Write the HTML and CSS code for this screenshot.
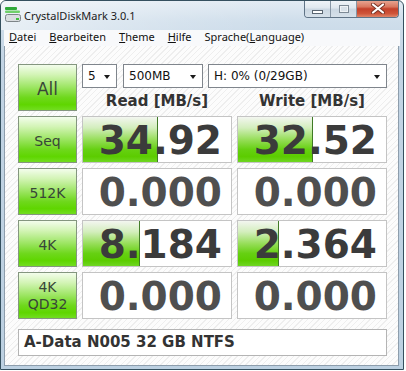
FILE: index.html
```html
<!DOCTYPE html>
<html lang="de">
<head>
    <meta charset="UTF-8">
    <meta name="viewport" content="width=device-width, initial-scale=1.0">
    <title>CrystalDiskMark 3.0.1</title>
    <link rel="stylesheet" href="styles.css">
</head>
<body>
    <div class="window">
        <div class="titlebar">
            <svg class="app-icon" width="16" height="15" viewBox="0 0 16 15">
                <rect x="0" y="0" width="12" height="3" rx="1" fill="#2fa83a"/>
                <rect x="0" y="3.5" width="15" height="2.5" rx="1" fill="#6fd06a"/>
                <rect x="0.5" y="7.5" width="15" height="7" rx="2" fill="#d9dde0" stroke="#7d8488"/>
                <rect x="11" y="11" width="3" height="2" fill="#3fbf3f"/>
            </svg>
            <span class="title">CrystalDiskMark 3.0.1</span>
            <div class="caption-buttons">
                <span class="cap cap-min"><i></i></span>
                <span class="cap cap-max"><i></i></span>
                <span class="cap cap-close">
                    <svg width="14" height="11" viewBox="0 0 14 11">
                        <path d="M2 1.5 L12 9.5 M12 1.5 L2 9.5" stroke="#7a3426" stroke-width="4" stroke-linecap="round"/>
                        <path d="M2 1.5 L12 9.5 M12 1.5 L2 9.5" stroke="#ffffff" stroke-width="2.2" stroke-linecap="round"/>
                    </svg>
                </span>
            </div>
        </div>

        <div class="menubar">
            <span><u>D</u>atei</span>
            <span><u>B</u>earbeiten</span>
            <span><u>T</u>heme</span>
            <span><u>H</u>ilfe</span>
            <span>Sprache(<u>L</u>anguage)</span>
        </div>

        <div class="client">
            <div class="grid">
                <button class="test test-all">All</button>
                <div class="top-controls">
                    <div class="combos">
                        <div class="combo combo-count">5</div>
                        <div class="combo combo-size">500MB</div>
                        <div class="combo combo-drive">H: 0% (0/29GB)</div>
                    </div>
                    <div class="headers">
                        <span>Read [MB/s]</span>
                        <span>Write [MB/s]</span>
                    </div>
                </div>

                <button class="test">Seq</button>
                <div class="value bar" style="background-size: 50.7% 100%;">34.92</div>
                <div class="value bar" style="background-size: 50.7% 100%;">32.52</div>

                <button class="test">512K</button>
                <div class="value zero">0.000</div>
                <div class="value zero">0.000</div>

                <button class="test">4K</button>
                <div class="value bar" style="background-size: 38.5% 100%;">8.184</div>
                <div class="value bar" style="background-size: 27.7% 100%;">2.364</div>

                <button class="test test-two">4K<br>QD32</button>
                <div class="value zero">0.000</div>
                <div class="value zero">0.000</div>
            </div>

            <div class="comment">A-Data N005 32 GB NTFS</div>
        </div>
    </div>
</body>
</html>
```

FILE: styles.css
```css
* {
    margin: 0;
    padding: 0;
    box-sizing: border-box;
}

body {
    background: #ffffff;
    font-family: "DejaVu Sans", Verdana, sans-serif;
}

.window {
    width: 404px;
    height: 370px;
    border: 1px solid #35505f;
    border-radius: 6px 6px 0 0;
    background: linear-gradient(to bottom, #e2ebf3 0px, #cfdeeb 20px, #c2d4e4 60px, #bcd0e1 100%);
    display: flex;
    flex-direction: column;
    overflow: hidden;
}

/* title bar */

.titlebar {
    height: 29px;
    display: flex;
    align-items: flex-start;
    padding-left: 4px;
    padding-right: 4px;
    background: linear-gradient(100deg, rgba(255,255,255,0.55) 0%, rgba(255,255,255,0.15) 45%, rgba(255,255,255,0) 70%);
}

.app-icon {
    margin-top: 6px;
    flex-shrink: 0;
}

.title {
    margin-top: 7px;
    margin-left: 3px;
    font-family: "Noto Sans", sans-serif;
    font-size: 11px;
    line-height: 15px;
    color: #1b1b1b;
}

.caption-buttons {
    margin-left: auto;
    display: flex;
    height: 18px;
    margin-top: -1px;
    border: 1px solid #5f7386;
    border-top: none;
    border-radius: 0 0 4px 4px;
    overflow: hidden;
}

.cap {
    display: flex;
    align-items: center;
    justify-content: center;
    height: 100%;
    background: linear-gradient(to bottom, #f1f5f9 0%, #e0e8ef 45%, #cbd7e2 55%, #d6e1ea 100%);
}

.cap + .cap {
    border-left: 1px solid #8796a5;
}

.cap-min {
    width: 25px;
}

.cap-min i {
    display: block;
    width: 11px;
    height: 4px;
    margin-top: 6px;
    background: #ffffff;
    border: 1px solid #5a6672;
}

.cap-max {
    width: 26px;
}

.cap-max i {
    display: block;
    width: 10px;
    height: 8px;
    border: 1px solid #7d8a96;
    box-shadow: inset 0 0 0 1px #eef2f5;
    background: #d8e1e9;
}

.cap-close {
    width: 42px;
    background: linear-gradient(to bottom, #e9aa98 0%, #d9775f 40%, #c3402a 52%, #cf553a 80%, #e0866a 100%);
}

/* menu */

.menubar {
    height: 16px;
    display: flex;
    gap: 13px;
    padding-left: 5px;
    margin: 0 3px;
    background: #f8f9fb;
    font-family: "Noto Sans", sans-serif;
    font-size: 11px;
    line-height: 14px;
    color: #111111;
}

.menubar u {
    text-underline-offset: 1px;
}

/* main area */

.client {
    flex: 1;
    margin: 0 4px 3px 3px;
    border-left: 1px solid #8d9dac;
    border-bottom: 1px solid #8d9dac;
    border-right: 1px solid #8d9dac;
    padding: 18px 0 0 13px;
    background: repeating-linear-gradient(135deg, #fcfcfc 0px, #fcfcfc 3px, #eeeeee 3px, #eeeeee 4px);
}

.grid {
    display: grid;
    grid-template-columns: 59px 150px 150px;
    grid-auto-rows: 47px;
    column-gap: 5px;
    row-gap: 5px;
}

.test {
    font-family: "DejaVu Sans", sans-serif;
    font-size: 14px;
    line-height: 17px;
    padding-top: 3px;
    color: #384638;
    border: 1px solid #84967f;
    background: linear-gradient(to bottom, #f3fdec 0%, #d2f4b4 22%, #9fe667 48%, #6fd81d 72%, #5fd600 88%, #72dd20 100%);
    cursor: pointer;
}

.test-all {
    font-size: 17px;
}

.test-two {
    padding-top: 1px;
}

.top-controls {
    grid-column: 2 / 4;
    display: flex;
    flex-direction: column;
}

.combos {
    display: flex;
    gap: 5px;
    height: 24px;
}

.combo {
    position: relative;
    height: 24px;
    border: 1px solid #7f858c;
    background: #ffffff;
    font-size: 12px;
    line-height: 21px;
    padding: 1px 0 0 5px;
    color: #111111;
}

.combo::after {
    content: "";
    position: absolute;
    right: 6px;
    top: 10px;
    border-left: 3.5px solid transparent;
    border-right: 3.5px solid transparent;
    border-top: 4px solid #1a1a1a;
}

.combo-count {
    width: 35px;
    margin-right: 1px;
}

.combo-size {
    width: 80px;
}

.combo-drive {
    width: 179px;
}

.headers {
    display: grid;
    grid-template-columns: 150px 150px;
    column-gap: 5px;
    padding-top: 4px;
    text-align: center;
    font-weight: bold;
    font-size: 15px;
    line-height: 18px;
    color: #333333;
}

.value {
    border: 1px solid #c4c4c4;
    background-color: #ffffff;
    background-repeat: no-repeat;
    text-align: right;
    padding: 3px 9px 0 0;
    font-weight: bold;
    font-size: 39px;
    line-height: 42px;
    color: #3b3b3b;
}

.value.bar {
    background-image:
        linear-gradient(to right, rgba(0,0,0,0) calc(100% - 1px), #3f7a25 calc(100% - 1px)),
        linear-gradient(to bottom, #f3f6f0 0%, #d3eebd 24%, #97de5a 50%, #66d012 72%, #5ccc00 88%, #6fd622 100%);
}

.value.zero {
    color: #4f4f4f;
}

.comment {
    margin-top: 10px;
    width: 369px;
    height: 27px;
    border: 1px solid #b4b4b4;
    background: #ffffff;
    padding-left: 5px;
    font-weight: bold;
    font-size: 15px;
    line-height: 25px;
    color: #333333;
}
```
